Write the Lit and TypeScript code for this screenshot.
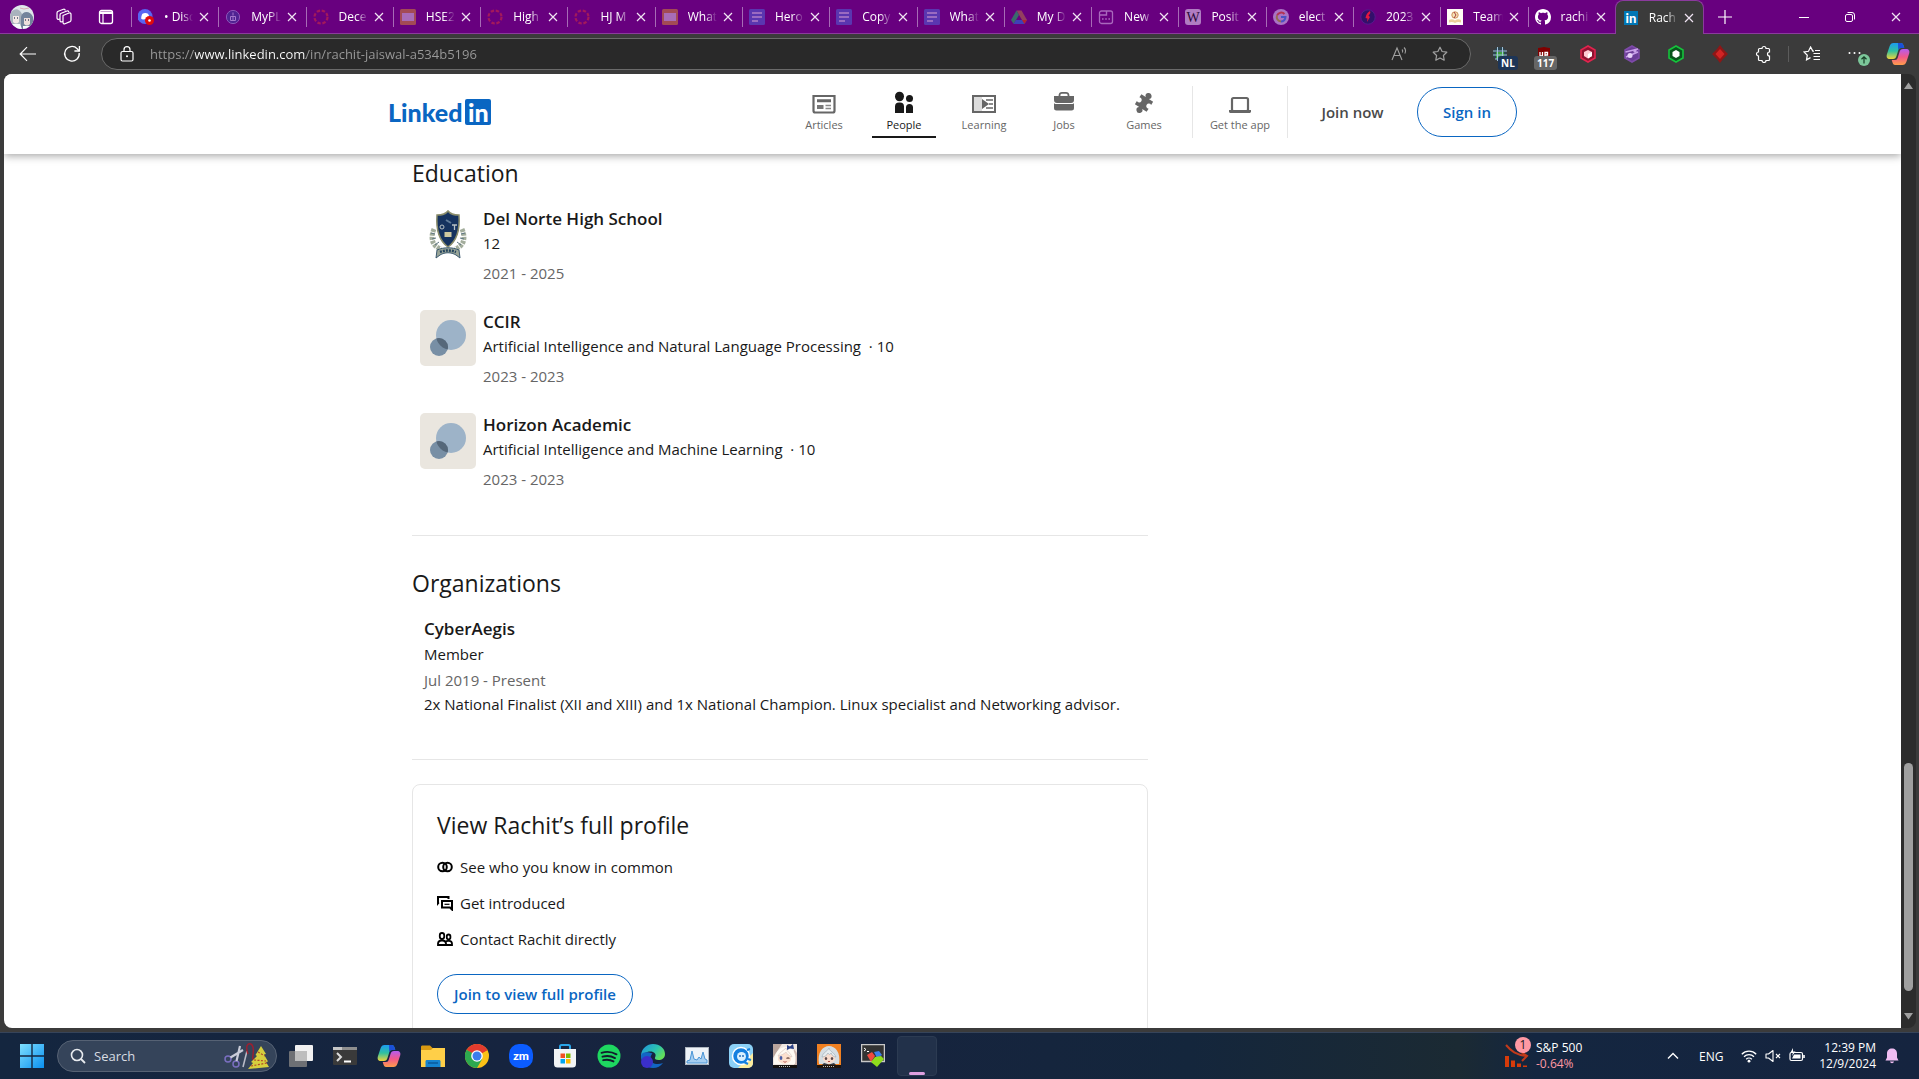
import { LitElement, html, css, svg, nothing, TemplateResult } from "lit";
import { customElement } from "lit/decorators.js";
import { classMap } from "lit/directives/class-map.js";

const icon = (w: number, h: number, body: TemplateResult) =>
  html`<svg width=${w} height=${h} viewBox="0 0 ${w} ${h}" fill="none" aria-hidden="true">${body}</svg>`;

/* ---------- favicons, 16 x 16 ---------- */
const canvasRing = svg`<circle cx="8" cy="8" r="6.5" stroke="#a3195b" stroke-width="2.2" stroke-dasharray="3.4 1.7"/>`;
const slides = svg`<rect width="16" height="16" rx="1.5" fill="#a34a55"/><rect x="2" y="4" width="12" height="8" fill="#a86cb8"/>`;
const docs = svg`<rect width="16" height="16" rx="1.5" fill="#5a36b0"/><path d="M3 4h10M3 8h10M3 12h6" stroke="#b07cc6" stroke-width="1.6"/>`;

const discord = svg`<circle cx="7" cy="7.5" r="7.5" fill="#5865f2"/><path d="M3.2 9.8c0-2.500.6-4.300 1.300-5.100 1.500-.8 4-.8 5.500 0 .8 1 1.300 2.800 1.300 5.100-1 .8-1.800 1-2.200.7-1-.4-2.800-.4-3.700 0-.5.2-1.300 0-2.200-.7z" fill="#fff"/><circle cx="11.500" cy="11.500" r="4.500" fill="#e00b0b"/><circle cx="11.500" cy="11.500" r="1.300" fill="#fff"/>`;
const pltw = svg`<circle cx="8" cy="8" r="6.600" fill="#4f2392" stroke="#8c56b8"/><path d="M8 3.500v3M5.500 7.500h5v4h-5zM8 7.500v4" stroke="#a678cc"/>`;
const drive = svg`<path d="M5.500 1.500h5L16 11h-5z" fill="#93405f"/><path d="M5.500 1.500 0 11l2.600 4L8 6z" fill="#3a6a6c"/><path d="M5 11h11l-2.600 4H2.600z" fill="#4040b8"/><path d="M11 11h5l-2.600 4z" fill="#b32330"/>`;
const newTab = svg`<rect x="1.500" y="2" width="13" height="12.500" rx="2" stroke="#a968bd" stroke-width="1.300"/><path d="M1.500 6h7V2M4 10h1.600M7.200 10h1.600M10.400 10H12" stroke="#a968bd" stroke-width="1.400"/>`;
const wiki = svg`<rect width="16" height="16" rx="3" fill="#b07cc2"/><text x="8" y="13" text-anchor="middle" font-family="Liberation Serif, serif" font-size="14" fill="#2b0a3a">W</text>`;
const google = svg`<circle cx="8" cy="8" r="8" fill="#a974c4"/><path d="M11.500 5A4.500 4.500 0 0 0 4 6.500" stroke="#b23352" stroke-width="2"/><path d="M4 6.500A4.500 4.500 0 0 0 8 12.500" stroke="#947050" stroke-width="2"/><path d="M8 12.500A4.500 4.500 0 0 0 12.500 8H8" stroke="#4a52c4" stroke-width="2"/>`;
const flame = svg`<circle cx="8" cy="8" r="7.200" fill="#33106a" stroke="#561a8e"/><path d="M10 2c1 2-.2 3-1.500 4.500L10 8l-3 5 .5-3.500L5.500 9c.5-3.500 2-5.500 4.500-7z" fill="#e5173f"/>`;
const team = svg`<rect width="16" height="16" fill="#fffdf5"/><path d="M2 11c2-1 4-1 6 .5 2-1.500 4-1.500 6-.5v2.500c-2-.8-4-.8-6 .5-2-1.300-4-1.300-6-.5z" fill="#ecd09a"/><circle cx="8" cy="6" r="3.200" fill="#f7e3b4" stroke="#cf8f5e"/><path d="M7 3l2 3-2 3" stroke="#a43c3c"/>`;
const github = svg`<path fill="#fff" d="M8 0C3.580 0 0 3.580 0 8c0 3.540 2.290 6.530 5.470 7.590.4.070.55-.17.55-.38 0-.19-.01-.82-.01-1.490-2.010.37-2.530-.49-2.690-.94-.09-.23-.48-.94-.82-1.130-.28-.15-.68-.52-.01-.53.63-.01 1.080.58 1.230.82.72 1.210 1.870.87 2.330.66.07-.52.28-.87.51-1.070-1.780-.2-3.640-.89-3.640-3.950 0-.87.31-1.590.82-2.150-.08-.2-.36-1.020.08-2.120 0 0 .67-.21 2.200.82.64-.18 1.320-.27 2-.27s1.360.09 2 .27c1.530-1.040 2.200-.82 2.200-.82.44 1.100.16 1.920.08 2.120.51.56.82 1.270.82 2.150 0 3.070-1.870 3.750-3.650 3.950.29.25.54.73.54 1.480 0 1.070-.01 1.930-.01 2.200 0 .21.15.46.55.38A8.010 8.010 0 0 0 16 8c0-4.420-3.580-8-8-8z"/>`;
const inFav = svg`<rect x="1" y="1" width="14" height="14" fill="#0077b5"/><text x="8" y="13" text-anchor="middle" font-family="Lato, sans-serif" font-weight="900" font-size="13" fill="#fff">in</text>`;

interface Tab { title: string; fav: TemplateResult; active?: boolean }
const tabs: Tab[] = [
  { title: "• Disc", fav: discord },
  { title: "MyPL", fav: pltw },
  { title: "Dece", fav: canvasRing },
  { title: "HSE2", fav: slides },
  { title: "High", fav: canvasRing },
  { title: "HJ M", fav: canvasRing },
  { title: "What", fav: slides },
  { title: "Hero", fav: docs },
  { title: "Copy", fav: docs },
  { title: "What", fav: docs },
  { title: "My D", fav: drive },
  { title: "New", fav: newTab },
  { title: "Posit", fav: wiki },
  { title: "elect", fav: google },
  { title: "2023", fav: flame },
  { title: "Team", fav: team },
  { title: "rachi", fav: github },
  { title: "Rach", fav: inFav, active: true },
];

/* ---------- browser chrome icons ---------- */
const avatar = icon(24, 24, svg`<clipPath id="av"><circle cx="12" cy="12" r="12"/></clipPath><g clip-path="url(#av)"><rect width="24" height="24" fill="#dfe6ea"/><path d="M0 10C2 3 9 2 12 9l-1 12H0z" fill="#a9b3bd"/><path d="M11 12c1-6 9-7 12 0v12H11z" fill="#74849c"/><path d="M3 11h6v6c-2 2-4 2-6 0z" fill="#f3e9e6"/><path d="M14 13h6v6c-2 2-4 2-6 0z" fill="#eedfdc"/><path d="M4 13h1M7 13h1M15 15h1M18 15h1" stroke="#46506a" stroke-width="1.500"/><path d="M2 19h8l2 5H0zM13 21h9v3h-9z" fill="#f7fafb"/><path d="M10 3l4 1 5-1" stroke="#d7a9b0"/></g>`);
const workspaces = icon(20, 20, svg`<g stroke="#fff" stroke-width="1.200" stroke-linejoin="round"><path d="M9 8.500l6-2.500c1-.3 2 .2 2 1.300v5.700c0 .8-.4 1.300-1 1.600l-5 2.200c-1 .4-2-.2-2-1.200z"/><path d="M9 14.500l-1 .3c-1 .3-2-.2-2-1.200V8c0-.8.400-1.400 1.200-1.700L13 4c1-.3 1.600.2 1.800 1.200"/><path d="M6 12l-1 .3c-1 .3-2-.2-2-1.200V6c0-.8.400-1.400 1.200-1.700L9.500 2.300c1-.3 1.600.2 1.800 1.200"/></g>`);
const tabActions = icon(16, 16, svg`<rect x="1.500" y="1.500" width="13" height="13" rx="2" stroke="#fff" stroke-width="1.300"/><path d="M1.500 2.500h13v2.500h-13z" fill="#fff"/><path d="M5 5v9" stroke="#fff" stroke-width="1.200"/>`);
const closeX = icon(10, 10, svg`<path d="M1 1l8 8M9 1L1 9" stroke="#f0e4f3" stroke-width="1.200"/>`);
const plus = icon(14, 14, svg`<path d="M7 0v14M0 7h14" stroke="#fff" stroke-width="1.200"/>`);
const minimize = icon(10, 10, svg`<path d="M0 5.500h10" stroke="#fff"/>`);
const restore = icon(10, 10, svg`<rect x=".5" y="2.500" width="7" height="7" rx="1.500" stroke="#fff"/><path d="M2.500 .5H7A2.500 2.500 0 0 1 9.500 3v4.500" stroke="#fff"/>`);
const back = icon(18, 16, svg`<path d="M17 8H1.500M8 1.200L1.200 8 8 14.800" stroke="#fff" stroke-width="1.200"/>`);
const reload = icon(18, 18, svg`<path d="M16.200 8a7.300 7.300 0 1 1-2-4.300L16.200 6" stroke="#fff" stroke-width="1.300"/><path d="M16.400 1v5h-5" stroke="#fff" stroke-width="1.300"/>`);
const lock = icon(14, 16, svg`<rect x="1" y="5.500" width="12" height="9.500" rx="1.500" stroke="#fff" stroke-width="1.200"/><path d="M4 5.500V3.700a3 3 0 0 1 6 0v1.800" stroke="#fff" stroke-width="1.200"/><circle cx="7" cy="10.200" r="1" fill="#fff"/>`);
const readAloud = icon(18, 16, svg`<path d="M1 14L6 2l5 12M3 9.500h6" stroke="#a0a0a0" stroke-width="1.100"/><path d="M11 3.500c.8.800.8 2.200.4 3M13 1.500c1.800 1.800 1.800 4.200.8 6" stroke="#a0a0a0" stroke-width="1.100"/>`);
const star = icon(16, 16, svg`<path d="M8 1.200l2.100 4.300 4.700.7-3.400 3.300.8 4.700L8 12l-4.200 2.200.8-4.700L1.200 6.200l4.700-.7z" stroke="#a0a0a0" stroke-width="1.200" stroke-linejoin="round"/>`);
const globe = icon(16, 16, svg`<circle cx="8" cy="8" r="7" fill="#2c4450"/><path d="M4 6h8v7H4z" fill="#3fa33f"/><path d="M1 5h14M1 9h14M3 13h10M5.500 1v14M10.500 1v14" stroke="#9fc0d8"/>`);
const ublock = icon(16, 16, svg`<path d="M2 2c3 0 4-1 6-1s3 1 6 1v12H2z" fill="#800000"/><path d="M4 6v4h2.500V6M9 11V6.500h2.500V9H9" stroke="#fff" stroke-width="1.300"/>`);
const hex = (edge: string, fill: string, glyph: TemplateResult) =>
  icon(16, 18, svg`<path d="M8 1l7 4v8l-7 4-7-4V5z" fill=${fill} stroke=${edge} stroke-width="1.600"/>${glyph}`);
const hexRed = hex("#e0244e", "#8e1230", svg`<path d="M8 5l4 2v4l-4 2.500L4 11V7z" fill="#ffc9d3"/><path d="M8 9l4-2v4l-4 2.500z" fill="#fff"/>`);
const hexViolet = hex("#7d4aa8", "#6b3c98", svg`<path d="M1.500 7L14 4M2 12l12-5" stroke="#c9a0e8" stroke-width="1.500"/><circle cx="6" cy="10.500" r="2.500" fill="#e6cff7"/><circle cx="11" cy="6" r="1.700" fill="#caa2ea"/>`);
const hexGreen = hex("#16c23c", "#08551c", svg`<path d="M8 5l3.500 2v4L8 13l-3.500-2V7z" fill="#fff"/>`);
const diamond = icon(18, 18, svg`<path d="M9 0l3 4 5 5-5 5-3 4-3-4-5-5 5-5z" fill="#8f1616"/><path d="M9 4l4.500 5L9 14 4.500 9z" fill="#d12424"/>`);
const puzzleLine = icon(18, 18, svg`<path d="M4.500 3.500H7a2 2 0 0 1 4 0h2.500a1 1 0 0 1 1 1V7a2 2 0 0 0 0 4v3.500a1 1 0 0 1-1 1H11a2 2 0 0 1-4 0H4.500a1 1 0 0 1-1-1V11a2 2 0 0 1 0-4V4.500a1 1 0 0 1 1-1z" stroke="#fff" stroke-width="1.200"/>`);
const favorites = icon(18, 16, svg`<path d="M11 5.200l-1.200-.1L7.600 1 5.500 5.300l-4.500.7 3.300 3.200-.8 4.600L7.500 11.600M10.500 7.500H17M10.500 10.500H17M10.500 13.500H17M12 4.500h5" stroke="#fff" stroke-width="1.200"/>`);
const dots = icon(16, 16, svg`<circle cx="2.500" cy="7" r="1" fill="#fff"/><circle cx="7.500" cy="7" r="1" fill="#fff"/><circle cx="12.500" cy="7" r="1" fill="#fff"/>`);
const upArrow = icon(12, 12, svg`<circle cx="6" cy="6" r="6" fill="#7cc79a"/><path d="M6 9.500V3M3.500 5.200L6 2.800l2.500 2.400" stroke="#173d26" stroke-width="1.200"/>`);
const copilot = (id: string) => icon(24, 24, svg`
  <defs>
    <linearGradient id="${id}a" x1="0" y1="0" x2="0" y2="1"><stop offset="0" stop-color="#1c9bf0"/><stop offset=".5" stop-color="#2fc1a0"/><stop offset="1" stop-color="#f1d43a"/></linearGradient>
    <linearGradient id="${id}b" x1="0" y1="0" x2="0" y2="1"><stop offset="0" stop-color="#b45cf0"/><stop offset=".5" stop-color="#f2588a"/><stop offset="1" stop-color="#ff9d4a"/></linearGradient>
  </defs>
  <path d="M7.500 1h7.500c1.500 0 2 1 2.500 2.500l.8 2.500h-3.300c-1.500 0-2.300.8-2.800 2.500L10.500 14c-.6 2-1.500 3-3.500 3H4c-3 0-4-2-3-5L3.500 4.500C4.300 2 5.500 1 7.500 1z" fill="url(#${id}a)"/>
  <path d="M12 1h3c1.500 0 2 1 2.500 2.500l.8 2.500H15c-1.500 0-2.300.8-2.800 2.500z" fill="#1b50d8"/>
  <path d="M16.500 23H9c-1.500 0-2-1-2.500-2.500L5.700 18H9c1.500 0 2.300-.8 2.800-2.500L13.500 10c.6-2 1.500-3 3.500-3h3c3 0 4 2 3 5l-2.500 7.500c-.8 2.500-2 3.500-4 3.500z" fill="url(#${id}b)"/>`);

/* ---------- site icons ---------- */
const articles = icon(24, 24, svg`<path d="M1.500 5h21v14.700c0 1-.8 1.800-1.800 1.800H3.300c-1 0-1.800-.8-1.800-1.800z" stroke="#666" stroke-width="2.200"/><path d="M5 9.800h14" stroke="#666" stroke-width="3"/><path d="M13.500 14.500h5.500M13.500 17.500h5.500" stroke="#888" stroke-width="1.500"/><path d="M5 16h6.500" stroke="#777" stroke-width="4"/>`);
const people = icon(24, 24, svg`<g fill="#191919"><ellipse cx="7.500" cy="5.500" rx="4.500" ry="4.800"/><circle cx="17.500" cy="7.500" r="3.500"/><path d="M3 22v-6.500a4 4 0 0 1 4-4h1a4 4 0 0 1 4 4V22zM14 22v-5.500a3.500 3.500 0 0 1 7 0V22z"/></g>`);
const learning = icon(24, 24, svg`<rect x="1" y="5" width="22" height="16" stroke="#666" stroke-width="2"/><path d="M2 6h8v14H2z" fill="#dcdcdc"/><path d="M10 8l7 5-7 5z" fill="#666"/><path d="M14 9h7M17 13h4M14 17h7" stroke="#666" stroke-width="1.500"/>`);
const jobs = icon(24, 24, svg`<path d="M7.500 5.500V4A2.500 2.500 0 0 1 10 1.800h4A2.500 2.500 0 0 1 16.500 4v1.500" stroke="#666" stroke-width="1.800"/><path d="M2 5h20v4a3 3 0 0 1-3 3H5a3 3 0 0 1-3-3zM2 12.200c.8.600 1.800.9 3 .9h14c1.200 0 2.200-.3 3-.9V17a2.500 2.500 0 0 1-2.500 2.500h-15A2.500 2.500 0 0 1 2 17z" fill="#666"/>`);
const games = icon(24, 24, svg`<g transform="rotate(33 12 12)"><path d="M5 6h5.200a3 3 0 1 1 3.600 0H19v3.700a2.600 2.600 0 1 0 0 4.600V18h-5.200a3 3 0 1 1-3.600 0H5v-3.700a2.600 2.600 0 1 0 0-4.600z" fill="#666"/></g>`);
const laptop = icon(24, 24, svg`<rect x="4" y="7" width="16" height="13" rx="1.500" stroke="#666" stroke-width="2.200"/><path d="M1 19h8l1 1h4l1-1h8v1.500c0 .8-.7 1.500-1.500 1.500h-19c-.8 0-1.500-.7-1.500-1.500z" fill="#666"/>`);
const rings = icon(16, 16, svg`<g stroke="#000" stroke-width="2"><circle cx="5.500" cy="8" r="4.300"/><circle cx="10.500" cy="8" r="4.300"/></g>`);
const chat = icon(16, 16, svg`<path d="M1 8.500V2h10.500v2" stroke="#000" stroke-width="2"/><path d="M5 6h10v8.500L13 12.500H5z" stroke="#000" stroke-width="2"/><path d="M7.500 9.300h5" stroke="#000" stroke-width="1.200"/><path d="M0 6v5l2.500-3z" fill="#000"/>`);
const pair = icon(16, 16, svg`<g stroke="#000" stroke-width="1.800"><rect x="2.800" y="2" width="4.400" height="6" rx="2.200"/><rect x="9.800" y="3.500" width="3.600" height="4.800" rx="1.800"/><path d="M1 14v-1.500A3.500 3.500 0 0 1 4.500 9.500h1A3.500 3.500 0 0 1 9 12.500V14zM9 14h6v-1.200c0-1.800-1.400-3-3-3h-1c-1 0-1.800.4-2.300 1"/></g>`);
const school = html`<svg class="logo" viewBox="0 0 56 56" aria-hidden="true"><path d="M14 22c-4 9-2 17 7 20M42 22c4 9 2 17-7 20" stroke="#a3ad9c" stroke-width="5" stroke-dasharray="3 1" fill="none"/><path d="M11 26l4 1M12 32l4-1M15 38l4-3M45 26l-4 1M44 32l-4-1M41 38l-4-3" stroke="#5c7482"/><path d="M28 4c3 4 7 4 11 4 1 14-1 25-11 32C18 33 16 22 17 8c4 0 8 0 11-4z" fill="#16335f" stroke="#8b8d6b" stroke-width="1.500"/><path d="M24.500 25h7v5h-7z" fill="#cfc9a0"/><path d="M26 13l5 3" stroke="#5e7a98" stroke-width="2"/><circle cx="22" cy="20" r="2" stroke="#b9c2c4" fill="none"/><path d="M32 18h5M34.500 18v5" stroke="#b9c2c4" stroke-width="1.300"/><path d="M17 43c7-3 15-3 22 0l1 8-4-3c-5-3-11-3-16 0l-4 3z" fill="#9aa597" stroke="#3a586e"/><path d="M20 45c5-2 11-2 16 0" stroke="#24445f" stroke-width="2.500" stroke-dasharray="2 1" fill="none"/></svg>`;
const ghost = html`<svg class="logo" viewBox="0 0 56 56" aria-hidden="true"><rect width="56" height="56" rx="5" fill="#eae6df"/><circle cx="31" cy="25" r="15" fill="#9db3c8"/><circle cx="19" cy="37" r="9" fill="#788fa5"/><clipPath id="big"><circle cx="31" cy="25" r="15"/></clipPath><circle cx="19" cy="37" r="9" fill="#56687a" clip-path="url(#big)"/></svg>`;

/* ---------- taskbar icons, 24 x 24 ---------- */
const startIcon = icon(24, 24, svg`<defs><linearGradient id="win" x1="0" y1="0" x2="1" y2="1"><stop offset="0" stop-color="#7fe0ff"/><stop offset="1" stop-color="#0a90f0"/></linearGradient></defs><path d="M0 0h11.300v11.300H0zM12.700 0H24v11.300H12.700zM0 12.700h11.300V24H0zM12.700 12.700H24V24H12.700z" fill="url(#win)"/>`);
const searchGlass = icon(16, 16, svg`<circle cx="7" cy="7" r="5.500" stroke="#e8ebef" stroke-width="1.600"/><path d="M11 11l4 4" stroke="#e8ebef" stroke-width="1.800"/>`);
const festive = icon(46, 28, svg`<circle cx="4" cy="17" r="3" stroke="#7a6fc0" stroke-width="1.500"/><circle cx="12" cy="22" r="3" stroke="#7a6fc0" stroke-width="1.500"/><path d="M6.500 15.500L19 8M12.500 19L16 4" stroke="#c9ccd8" stroke-width="2.200"/><path d="M19 25l4-16" stroke="#b9bcc8" stroke-width="1.500"/><path d="M24 12C20 1 27-1 29 5s-3 13 2 13" stroke="#9c2030" stroke-width="1.500"/><path d="M37 4l5 8-2 .5 4 7-2 .5 3 5-21 2 5-6-2-1 6-6-1.500-1z" fill="#d6cf3e"/><path d="M34 10l7 4M30 18l12 1M27 24l16-3" stroke="#b24a2a" stroke-dasharray="2 1.500" stroke-width="1.200"/>`);
const taskIcons: { name: string; art: TemplateResult }[] = [
  { name: "Task View", art: icon(24, 24, svg`<rect x="0" y="7" width="18" height="16" rx="1" fill="#6e7074"/><rect x="6" y="1" width="18" height="16" rx="1" fill="#f1f1f1"/><path d="M6 7h12v10H6z" fill="#bdbdbd"/>`) },
  { name: "Terminal", art: icon(24, 24, svg`<rect y="3" width="24" height="18" rx="1" fill="#3a3a3a"/><path d="M0 3h24v3H0z" fill="#8f8f8f"/><path d="M0 3h9v3H0z" fill="#c6c6c6"/><path d="M4 9l4 4-4 4" stroke="#ddd" stroke-width="2"/><path d="M11 17.500h7" stroke="#fff" stroke-width="2"/>`) },
  { name: "Copilot", art: copilot("tk") },
  { name: "File Explorer", art: icon(24, 24, svg`<path d="M0 3c0-1 .5-1.500 1.500-1.500H9L11.500 4H24v5H0z" fill="#d99a12"/><path d="M0 6h10l2-2h12v19H0z" fill="#ffcf48"/><path d="M4.500 23v-5.500c0-1 .6-1.500 1.500-1.500h12c.9 0 1.500.5 1.500 1.500V23z" fill="#1583d0"/><path d="M7 19h10" stroke="#0a5a9c" stroke-width="1.500"/>`) },
  { name: "Chrome", art: icon(24, 24, svg`<circle cx="12" cy="12" r="12" fill="#fbc116"/><path d="M12 12L1.600 6A12 12 0 0 1 22.400 6z" fill="#e33b2e"/><path d="M22.400 6H12v6z" fill="#e33b2e"/><path d="M1.600 6a12 12 0 0 0 10.400 18l5.200-9L12 12z" fill="#2da94f"/><path d="M1.600 6L7 15l5-3z" fill="#2da94f"/><circle cx="12" cy="12" r="5.800" fill="#fff"/><circle cx="12" cy="12" r="4.500" fill="#3b7ded"/>`) },
  { name: "Zoom", art: icon(24, 24, svg`<rect width="24" height="24" rx="10" fill="#0b5cff"/><text x="12" y="16" text-anchor="middle" font-family="Lato, sans-serif" font-weight="900" font-size="12" fill="#fff">zm</text>`) },
  { name: "Store", art: icon(24, 24, svg`<path d="M7 6V2.500C7 1.500 7.500 1 8.500 1h7c1 0 1.500.5 1.500 1.500V6" stroke="#2aa5e8" stroke-width="2"/><path d="M1 5h22v15a3.500 3.500 0 0 1-3.500 3.500h-15A3.500 3.500 0 0 1 1 20z" fill="#f2f4f6"/><path d="M7.500 9.500H12V14H7.500z" fill="#f25022"/><path d="M13 9.500h4.500V14H13z" fill="#7fba00"/><path d="M7.500 15H12v4.500H7.500z" fill="#00a4ef"/><path d="M13 15h4.500v4.500H13z" fill="#ffb900"/>`) },
  { name: "Spotify", art: icon(24, 24, svg`<circle cx="12" cy="12" r="11.500" fill="#1ed760"/><path d="M4.500 8.800c5-1.500 10.500-1 15 1.500M5.500 12.700c4.300-1.200 8.700-.8 12.500 1.400M6.200 16.200c3.500-.9 7-.6 10.300 1.200" stroke="#121c2c" stroke-width="1.900" stroke-linecap="round"/>`) },
  { name: "Edge", art: icon(24, 24, svg`<defs><linearGradient id="edge" x1="0" y1="0" x2="1" y2=".6"><stop offset="0" stop-color="#1f8fe0"/><stop offset=".6" stop-color="#2bc3b0"/><stop offset="1" stop-color="#63e05a"/></linearGradient></defs><path d="M0 11C1 4 6 0 12 0c7 0 12 4.500 12 10 0 4-3 6-6.500 6-3 0-4-1-3.500-2.500C16 10 13 7.500 9.500 7.500 5 7.500 1 10 0 16z" fill="url(#edge)"/><path d="M0 12c0 7 5 12 12 12 4 0 8-2 10-5-6 2.500-13 .5-12.500-5 0-2 1-3.500 2-4.500C6 7 0 8 0 12z" fill="#1266c4"/><circle cx="6" cy="18" r="6" fill="#3b2fc9"/>`) },
  { name: "Resource Monitor", art: icon(24, 24, svg`<rect x=".5" y="3.500" width="23" height="17" fill="#eef3f8" stroke="#aeb6c0"/><path d="M2 17l3-1 2-9 2 8 3 1 2-3 2 2 2-7 2 7 2 1v3H2z" fill="#a5cdf0" stroke="#4a95d6"/>`) },
  { name: "Desktop pet", art: icon(24, 24, svg`<rect width="24" height="24" rx="5" fill="#8bd0f7"/><path d="M24 9v10a5 5 0 0 1-5 5H9z" fill="#fbeb9c"/><circle cx="12" cy="12" r="8.500" fill="#1580e0" stroke="#fff" stroke-width="1.500"/><circle cx="12.500" cy="12.500" r="4.500" fill="#d9f0ff"/><path d="M11 11v2M14 11v2" stroke="#0e5bb0" stroke-width="1.300"/><path d="M18 6l3-1M19 15l3 1M15 18l4 2" stroke="#1580e0" stroke-width="2"/>`) },
  { name: "Genshin Impact", art: icon(24, 24, svg`<rect width="24" height="24" fill="#efe6e0"/><path d="M0 0h9L3 9 0 14z" fill="#b9a49c"/><path d="M24 24V9l-3-4v19z" fill="#cfb9b2"/><path d="M1 20C0 8 8 2 14 3c7 1 10 8 8 17z" fill="#fffaf3"/><path d="M5 12c4-4 10-4 13 0v4c-3 5-10 5-13 0z" fill="#fde0ce"/><path d="M5 12c2-4 5-5 8-8 1 4 4 4 6 9-3-1-5-3-6-5-2 2-4 3-8 4z" fill="#fffaf3" stroke="#d8c6c0" stroke-width=".7"/><ellipse cx="8" cy="14" rx="1.400" ry="2" fill="#4a5fa8"/><path d="M13.500 14.500c1-.8 2-.8 3 0" stroke="#6a4a42" stroke-width="1.200"/><path d="M10.500 17.500c1 .8 2 .8 3 0" stroke="#b4504a"/><path d="M14 1l3 1.500L20 0l1 5-4-.5L14 6z" fill="#2c4287"/><path d="M0 21h24v3H0z" fill="#15110f"/><path d="M6 22.500h12" stroke="#bbb" stroke-dasharray="1 1"/>`) },
  { name: "Honkai", art: icon(24, 24, svg`<rect width="24" height="24" fill="#f08021"/><path d="M2 20C0 8 6 2 12 2s12 6 10 18z" fill="#d5dde2"/><path d="M6 12c4-3 8-3 12 0v4c-4 5-8 5-12 0z" fill="#f8dccd"/><path d="M5 13c1-5 5-5 7-9 1 4 5 4 7 9-3 0-4-2-5-4-1 2-2 2-3 0-1 2-3 4-6 4z" fill="#e6ecef" stroke="#a3b0b9" stroke-width=".7"/><ellipse cx="9" cy="14.500" rx="1.200" ry="1.500" fill="#5b4b4e"/><ellipse cx="15" cy="14.500" rx="1.200" ry="1.500" fill="#5b4b4e"/><path d="M11 17.500h2" stroke="#b4504a"/><path d="M7 19l5 1.500 5-1.500 2 2H5z" fill="#33333a"/><path d="M0 21h24v3H0z" fill="#20140c"/><path d="M6 22.500h12" stroke="#bbb" stroke-dasharray="1 1"/>`) },
  { name: "MobaXterm", art: icon(24, 24, svg`<rect x=".5" y=".5" width="23" height="17" fill="#333" stroke="#c8c8c8" stroke-width="1.500"/><path d="M3 4l2 1.500L3 7M6 7.500h2" stroke="#fff"/><path d="M6 11l5-3 3 4-4 6z" fill="#f04a3e"/><path d="M13 8l5-1 3 4-5 3z" fill="#3d7fe8"/><path d="M10 18l4-5 6-1 3 3-7 8z" fill="#8fdc1c"/>`) },
];
const chevron = icon(12, 16, svg`<path d="M1 10.500L6 5.500l5 5" stroke="#fff" stroke-width="1.400"/>`);
const wifi = icon(16, 16, svg`<path d="M.8 6.200a10.200 10.200 0 0 1 14.400 0M3 8.700a7 7 0 0 1 10 0M5.200 11.200a4 4 0 0 1 5.600 0" stroke="#fff" stroke-width="1.300"/><circle cx="8" cy="13.200" r="1.400" fill="#fff"/>`);
const mute = icon(16, 16, svg`<path d="M1 6h2.500L8 2.500v11L3.500 10H1z" stroke="#fff" stroke-width="1.100" stroke-linejoin="round"/><path d="M11 6l4 4M15 6l-4 4" stroke="#fff" stroke-width="1.100"/>`);
const battery = icon(16, 16, svg`<rect x="1" y="4.500" width="12.500" height="8" rx="1.500" stroke="#fff" stroke-width="1.200"/><path d="M5 6.500h6.500v4H3z" fill="#fff"/><path d="M15 7v3" stroke="#fff" stroke-width="1.600"/><path d="M4 0L1.500 4.500H4L3 8l3.500-4.500H4z" fill="#fff"/>`);
const bell = icon(14, 16, svg`<path d="M7 .5c3 0 5 2 5 5v4l1.500 3H.5L2 9.500v-4c0-3 2-5 5-5zM5 13.500h4c-.3 1-1 1.700-2 1.700s-1.700-.7-2-1.700z" fill="#efbdf2"/>`);
const stocks = icon(24, 24, svg`<path d="M2 23V12M8 23v-6.500M14 23v-3.500M20 23v-1.500" stroke="#d63b0a" stroke-width="4"/><path d="M1 1c5 6 10 10 21 11M16 8l6 4-5 5" stroke="#c23a1a" stroke-width="2"/>`);

const navItems = [
  { label: "Articles", art: articles },
  { label: "People", art: people, current: true },
  { label: "Learning", art: learning },
  { label: "Jobs", art: jobs },
  { label: "Games", art: games },
];

const schools = [
  { name: "Del Norte High School", detail: "12", years: "2021 - 2025", art: school },
  { name: "CCIR", detail: "Artificial Intelligence and Natural Language Processing \u00a0· 10", years: "2023 - 2023", art: ghost },
  { name: "Horizon Academic", detail: "Artificial Intelligence and Machine Learning \u00a0· 10", years: "2023 - 2023", art: ghost },
];

const reset = css`
  * { box-sizing: border-box; margin: 0; padding: 0; }
  button, input { font: inherit; color: inherit; background: none; border: 0; outline: none; }
  button { cursor: pointer; }
  a { color: inherit; text-decoration: none; }
  ul { list-style: none; }
  svg { display: block; flex: none; }
`;

@customElement("browser-chrome")
class BrowserChrome extends LitElement {
  static styles = [reset, css`
    :host { display: block; background: #3b3b3b; color: #fff; font-size: 12px; }
    .strip { display: flex; height: 34px; background: #68007f; border-bottom: 1px solid #8b3b9d; }
    .tool { display: flex; flex: none; align-items: center; justify-content: center; width: 42px; }
    .leading { display: flex; flex: none; width: 131px; padding-left: 1px; }
    .tabs { display: flex; flex: 1; min-width: 0; }
    .tab { display: flex; flex: 1 1 0; min-width: 0; align-items: center; position: relative; padding: 0 3px 0 7px; }
    .tab::before { content: ""; position: absolute; left: 0; top: 7px; height: 20px; width: 1px; background: #a76bb6; }
    .tab.active { background: #3b3b3b; border: 1px solid #8b3b9d; border-bottom: 0; border-radius: 8px 8px 0 0; margin-bottom: -1px; }
    .tab.active::before { display: none; }
    .title { flex: 1; min-width: 0; margin-left: 10px; overflow: hidden; white-space: nowrap; line-height: 20px;
      mask-image: linear-gradient(90deg, #000 60%, transparent 100%); }
    .close { display: flex; flex: none; width: 22px; height: 24px; align-items: center; justify-content: center; }
    .win { display: flex; flex: none; width: 215px; }
    .new { margin-right: auto; }
    .ctl { width: 46px; }
    .bar { display: flex; height: 40px; align-items: center; }
    .nav { width: 44px; height: 32px; }
    .bar .leading { width: 101px; padding-left: 6px; }
    .address { display: flex; flex: 1; min-width: 0; align-items: center; height: 32px; margin-right: 7px; padding: 0 10px 0 18px;
      background: #292929; border: 1px solid #6a6a6a; border-radius: 16px; }
    .url { flex: 1; min-width: 0; margin-left: 16px; font-size: 13px; height: 24px; color: transparent;
      background: linear-gradient(90deg, #9b9b9b 45px, #fff 45px, #fff 156px, #9b9b9b 156px); -webkit-background-clip: text; background-clip: text; }
    .mini { width: 40px; height: 28px; }
    .ext { position: relative; width: 44px; height: 32px; }
    .end { position: relative; width: 43px; height: 32px; }
    .badge { position: absolute; left: 20px; top: 18px; padding: 0 3px; border-radius: 3px; background: #1d3557; font-size: 10px; font-weight: 700; line-height: 14px; }
    .count { left: 12px; background: #666; }
    .update { position: absolute; left: 25px; top: 16px; }
    .rule { width: 1px; height: 16px; margin: 0 1px 0 2px; background: #5c5c5c; }
  `];
  render() {
    return html`
      <div class="strip">
        <div class="leading">
          <button class="tool" aria-label="Profile">${avatar}</button>
          <button class="tool" aria-label="Workspaces">${workspaces}</button>
          <button class="tool" aria-label="Tab actions">${tabActions}</button>
        </div>
        <div class="tabs">
          ${tabs.map(t => html`<div class=${classMap({ tab: true, active: !!t.active })}>
            ${icon(16, 16, t.fav)}<a class="title" href="#">${t.title}</a>
            <button class="close" aria-label="Close tab">${closeX}</button>
          </div>`)}
        </div>
        <div class="win">
          <button class="tool new" aria-label="New tab">${plus}</button>
          <button class="tool ctl" aria-label="Minimize">${minimize}</button>
          <button class="tool ctl" aria-label="Restore">${restore}</button>
          <button class="tool ctl" aria-label="Close">${closeX}</button>
        </div>
      </div>
      <div class="bar">
        <div class="leading">
          <button class="tool nav" aria-label="Back">${back}</button>
          <button class="tool nav" aria-label="Refresh">${reload}</button>
        </div>
        <div class="address">
          ${lock}
          <input class="url" aria-label="Address" value="https://www.linkedin.com/in/rachit-jaiswal-a534b5196">
          <button class="tool mini" aria-label="Read aloud">${readAloud}</button>
          <button class="tool mini" aria-label="Favorite">${star}</button>
        </div>
        <button class="tool ext" aria-label="Language">${globe}<span class="badge">NL</span></button>
        <button class="tool ext" aria-label="Blocker">${ublock}<span class="badge count">117</span></button>
        <button class="tool ext" aria-label="Red extension">${hexRed}</button>
        <button class="tool ext" aria-label="Violet extension">${hexViolet}</button>
        <button class="tool ext" aria-label="Green extension">${hexGreen}</button>
        <button class="tool ext" aria-label="Diamond extension">${diamond}</button>
        <button class="tool ext" aria-label="Extensions">${puzzleLine}</button>
        <span class="rule"></span>
        <button class="tool end" aria-label="Favorites">${favorites}</button>
        <button class="tool end" aria-label="Settings and more">${dots}<span class="update">${upArrow}</span></button>
        <button class="tool end" aria-label="Copilot">${copilot("tb")}</button>
      </div>`;
  }
}

@customElement("profile-page")
class ProfilePage extends LitElement {
  static styles = [reset, css`
    :host { display: block; overflow: hidden; background: #fff; color: #191919; font-size: 15px; border-radius: 8px 0 0 8px; }
    .header { position: relative; height: 80px; background: #fff; box-shadow: 0 2px 8px rgba(0,0,0,.35); }
    .inner { display: flex; align-items: center; width: 100%; max-width: 1129px; height: 76px; margin: 0 auto; }
    .brand { display: flex; align-items: center; gap: 3px; margin-right: auto; color: #0a66c2; font: 900 25px/26px Lato, sans-serif; }
    .in { width: 26px; height: 26px; border-radius: 2px; background: #0a66c2; color: #fff; text-align: center; }
    .nav { display: flex; gap: 16px; padding-right: 16px; }
    .item { display: flex; flex-direction: column; align-items: center; width: 64px; height: 52px; padding-top: 5px; color: #666; font-size: 11px; line-height: 20px; }
    .current { color: #191919; border-bottom: 2px solid #191919; }
    .app { width: 96px; border: solid #e6e6e6; border-width: 0 1px; }
    .join { width: 129px; height: 48px; color: #4a4a4a; font-weight: 600; }
    .sign { width: 100px; height: 50px; border: 1px solid #0a66c2; border-radius: 25px; color: #0a66c2; font-weight: 600; }
    .body { max-width: 1129px; margin: 0 auto; padding: 5px 0 0 24px; }
    .column { max-width: 736px; }
    .section { padding-bottom: 44px; border-bottom: 1px solid #e6e6e6; margin-bottom: 33px; }
    .section.last { margin-bottom: 24px; }
    h2 { font-size: 23px; font-weight: 400; line-height: 28px; }
    h3 { font-size: 17px; font-weight: 600; line-height: 24px; }
    .list { display: flex; flex-direction: column; gap: 25px; padding: 20px 0 0 8px; }
    .row { display: flex; gap: 7px; }
    .logo { width: 56px; height: 56px; }
    .line { line-height: 24px; }
    .years { margin-top: 6px; line-height: 24px; color: #666; }
    .org { padding: 20px 0 0 12px; }
    .role { line-height: 26px; }
    .muted { color: #666; }
    .note { line-height: 22px; }
    .card { padding: 24px 24px 48px; border: 1px solid #e6e6e6; border-radius: 8px; }
    .card h2 { line-height: 32px; }
    .perks { display: flex; flex-direction: column; gap: 12px; padding: 14px 0 23px; }
    .perk { display: flex; align-items: center; gap: 7px; line-height: 24px; }
    .full { height: 40px; padding: 0 16px; border: 1px solid #0a66c2; border-radius: 20px; color: #0a66c2; font-weight: 600; }
  `];
  render() {
    return html`
      <header class="header"><div class="inner">
        <a class="brand" href="#" aria-label="LinkedIn"><span>Linked</span><span class="in">in</span></a>
        <nav class="nav">
          ${navItems.map(n => html`<a class=${classMap({ item: true, current: !!n.current })} href="#" aria-current=${n.current ? "page" : nothing}>${n.art}<span>${n.label}</span></a>`)}
        </nav>
        <a class="item app" href="#">${laptop}<span>Get the app</span></a>
        <button class="join">Join now</button>
        <button class="sign">Sign in</button>
      </div></header>
      <main class="body"><div class="column">
        <section class="section">
          <h2>Education</h2>
          <ul class="list">
            ${schools.map(s => html`<li class="row">${s.art}<div>
              <h3>${s.name}</h3><p class="line">${s.detail}</p><p class="years">${s.years}</p>
            </div></li>`)}
          </ul>
        </section>
        <section class="section last">
          <h2>Organizations</h2>
          <div class="org">
            <h3>CyberAegis</h3>
            <p class="role">Member</p>
            <p class="role muted">Jul 2019 - Present</p>
            <p class="note">2x National Finalist (XII and XIII) and 1x National Champion. Linux specialist and Networking advisor.</p>
          </div>
        </section>
        <section class="card">
          <h2>View Rachit’s full profile</h2>
          <ul class="perks">
            <li class="perk">${rings}<span>See who you know in common</span></li>
            <li class="perk">${chat}<span>Get introduced</span></li>
            <li class="perk">${pair}<span>Contact Rachit directly</span></li>
          </ul>
          <button class="full">Join to view full profile</button>
        </section>
      </div></main>`;
  }
}

@customElement("task-bar")
class TaskBar extends LitElement {
  static styles = [reset, css`
    :host { display: flex; box-sizing: border-box; align-items: center; height: 47px; padding: 0 20px 0 10px; color: #fff; font-size: 12px; border-top: 1px solid #36445a;
      background: linear-gradient(90deg, #14263f, #17233f 40%, #14263c 62%, #1b2a33 76%, #142640 80%, #15243f); }
    .task { display: flex; align-items: center; justify-content: center; width: 44px; height: 40px; }
    .search { display: flex; align-items: center; width: 220px; height: 32px; margin: 0 2px 0 3px; padding: 0 6px 0 12px; border: 1px solid #566274; border-radius: 16px; background: #35445a; }
    .field { flex: 1; min-width: 0; margin-left: 8px; font-size: 13px; }
    .field::placeholder { color: #d8dce2; opacity: 1; }
    .running { position: relative; width: 40px; margin-left: 2px; border: 1px solid #2c3b52; border-radius: 4px; background: #22314a; }
    .running::after { content: ""; position: absolute; left: 11px; bottom: 0; width: 16px; height: 3px; border-radius: 2px; background: #dfa0e0; }
    .widget { display: flex; align-items: center; gap: 7px; margin-left: auto; text-align: left; line-height: 16px; }
    .pic { position: relative; }
    .alert { position: absolute; left: 10px; top: -7px; width: 16px; height: 16px; border-radius: 8px; background: #ff99a4; color: #222; line-height: 16px; text-align: center; }
    .loss { color: #ff99a4; }
    .quote { width: 55px; }
    .more { margin-left: 76px; }
    .lang { width: 24px; margin: 0 18px 0 20px; }
    .tray { display: flex; gap: 8px; }
    .clock { width: 71px; margin-right: 9px; text-align: right; line-height: 16px; }
  `];
  render() {
    return html`
      <button class="task" aria-label="Start">${startIcon}</button>
      <label class="search">${searchGlass}<input class="field" type="search" placeholder="Search" aria-label="Search">${festive}</label>
      ${taskIcons.map(t => html`<button class="task" aria-label=${t.name}>${t.art}</button>`)}
      <button class="task running" aria-label="Running app"></button>
      <button class="widget"><span class="pic">${stocks}<span class="alert">1</span></span>
        <span class="quote"><div>S&amp;P 500</div><div class="loss">-0.64%</div></span></button>
      <button class="more" aria-label="Hidden icons">${chevron}</button>
      <button class="lang">ENG</button>
      <button class="tray" aria-label="Network, sound, battery">${wifi}${mute}${battery}</button>
      <button class="clock"><div>12:39 PM</div><div>12/9/2024</div></button>
      <button aria-label="Notifications">${bell}</button>`;
  }
}

@customElement("app-root")
class AppRoot extends LitElement {
  static styles = css`
    :host { display: grid; grid-template: auto minmax(0, 1fr) auto / minmax(0, 1fr); height: 100vh; overflow: hidden; background: #3b3b3b; font-family: "Open Sans", "Noto Sans", sans-serif; }
    .view { display: flex; min-height: 0; padding: 0 3px 4px 4px; }
    .page { flex: 1; min-width: 0; }
    .scroll { display: flex; box-sizing: border-box; flex-direction: column; align-items: center; width: 15px; padding: 8px 0; border-radius: 0 8px 8px 0; background: #2c2c2c; }
    .above { flex: 667; }
    .thumb { flex: 225; width: 9px; border-radius: 5px; background: #9f9f9f; }
    .below { flex: 22; }
  `;
  render() {
    return html`
      <browser-chrome></browser-chrome>
      <div class="view">
        <profile-page class="page"></profile-page>
        <div class="scroll">
          ${icon(9, 7, svg`<path d="M4.500 0.500L9 7H0z" fill="#9f9f9f"/>`)}
          <div class="above"></div><div class="thumb"></div><div class="below"></div>
          ${icon(9, 7, svg`<path d="M4.500 6.500L9 0H0z" fill="#9f9f9f"/>`)}
        </div>
      </div>
      <task-bar></task-bar>`;
  }
}
